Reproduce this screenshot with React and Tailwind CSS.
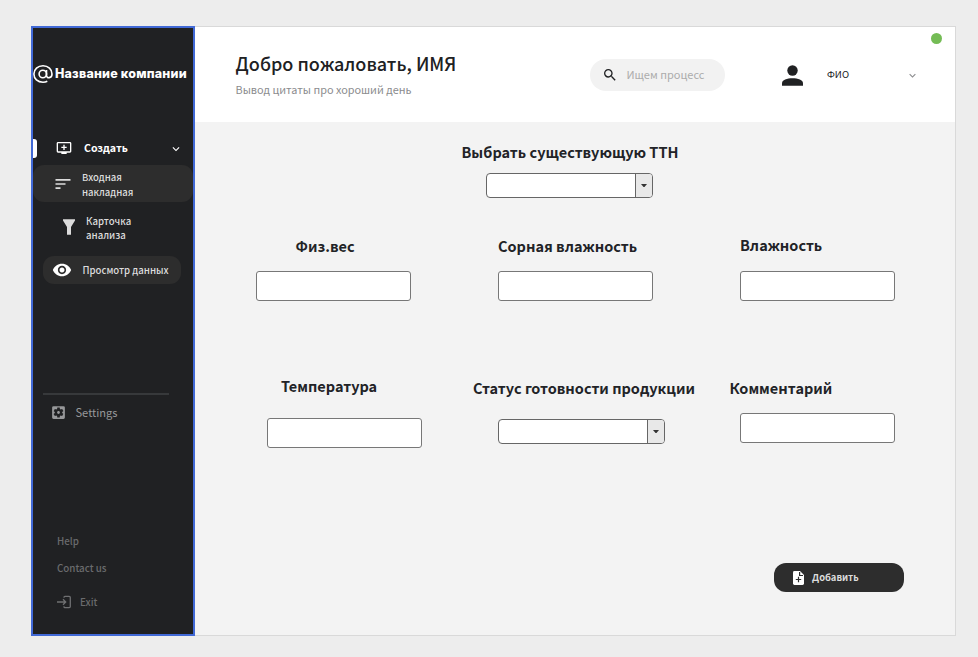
import {
  MdAddToQueue,
  MdExpandMore,
  MdSearch,
  MdSettingsApplications,
  MdSort,
  MdVisibility,
} from "react-icons/md";

function AtLogo() {
  return (
    <svg className="h-[18px] w-5 shrink-0" viewBox="0 0 20 18" fill="none" stroke="#fff" strokeWidth="1.600">
      <ellipse cx="9.8" cy="9" rx="3.7" ry="3.8" />
      <path d="M13.5 5v5.6c0 3 5.5 3 5.5-1.7C19 4.300 15.200.8 10 .8S.9 4.300.9 9s3.700 8.200 9.100 8.200c1.500 0 3-.3 4.300-1" />
    </svg>
  );
}

function FunnelIcon() {
  return (
    <svg className="h-4 w-3 shrink-0" viewBox="0 0 12 16" fill="#dcdcdc">
      <path d="M0 .3h12v1.200L8 8v7.700H4V8L0 1.500z" />
    </svg>
  );
}

function PersonIcon() {
  return (
    <svg className="h-[21px] w-[21px] shrink-0" viewBox="0 0 21 21" fill="#202123">
      <circle cx="10.500" cy="5.500" r="5.200" />
      <path d="M0 20.700v-2.400c0-3.300 5-5 10.500-5s10.500 1.700 10.500 5v2.400z" />
    </svg>
  );
}

function ExitIcon() {
  return (
    <svg className="h-[14px] w-[14px] shrink-0" viewBox="0 0 14 14" fill="none" stroke="#6f7072" strokeWidth="1.3">
      <path d="M0 7h9M6 4.300L8.700 7 6 9.700M7 2.800V2.200q0-.9.9-.9h4.300q1.100 0 1.100 1.100v9.200q0 1.100-1.100 1.100H7.900q-.9 0-.9-.9v-.6" />
    </svg>
  );
}

function FileAddIcon() {
  return (
    <svg className="h-[14px] w-[11px] shrink-0" viewBox="0 0 11 14">
      <path fill="#fff" d="M1.400 0H7l4 4v8.600q0 1.400-1.400 1.400H1.400Q0 14 0 12.600V1.400Q0 0 1.400 0z" />
      <path fill="none" stroke="#2d2d2d" strokeWidth="1.200" d="M6.600 1v3.500H10M5.500 5.800v5.400M2.800 8.500h5.400" />
    </svg>
  );
}

function Label({ className = "", children }) {
  return (
    <div className={`whitespace-nowrap text-[14.500px] font-bold leading-5 text-[#222327] ${className}`}>
      {children}
    </div>
  );
}

function TextInput({ className = "" }) {
  return <input className={`block h-[30px] w-[155px] rounded-[3px] border border-[#777] bg-white ${className}`} />;
}

function Select({ className = "" }) {
  return (
    <div className={`flex h-[25px] w-[167px] overflow-hidden rounded-[4px] border border-[#666] bg-white ${className}`}>
      <div className="flex-1" />
      <div className="flex w-[17px] items-center justify-center border-l border-[#666] bg-[#e8e8e8]">
        <svg className="h-[3px] w-[6px]" viewBox="0 0 6 3" fill="#333">
          <path d="M0 0h6L3.500 3h-1z" />
        </svg>
      </div>
    </div>
  );
}

function Sidebar() {
  return (
    <aside className="flex w-[164px] shrink-0 flex-col border-2 border-[#4169d6] bg-[#202123] text-[#dcdcdc]">
      <div className="mt-[37px] flex h-[18px] items-center gap-[2px]">
        <AtLogo />
        <span className="whitespace-nowrap font-['Inter','Liberation_Sans',sans-serif] text-[12.5px] font-extrabold leading-[18px] tracking-[0.2px] text-white">
          Название компании
        </span>
      </div>

      <nav className="mt-[56px] flex flex-col">
        <div className="flex h-5 items-center text-white">
          <span className="-mt-px h-[19px] w-1 rounded-r-[3px] bg-white" />
          <MdAddToQueue className="-mt-[3px] ml-[19px] size-4" />
          <span className="-mt-[2px] ml-[12px] text-[10.600px] font-bold leading-4">Создать</span>
          <MdExpandMore className="ml-auto mr-[10px] size-[14px]" />
        </div>
        <div className="mt-[6px] flex h-[37px] items-center rounded-[11px] bg-[#2d2d2d]">
          <MdSort className="ml-5 size-5" />
          <span className="ml-[9px] mt-[2px] text-[9.500px] font-medium leading-[15px]">
            Входная
            <br />
            накладная
          </span>
        </div>
        <div className="mt-[11px] flex h-[30px] items-center">
          <span className="-mt-[2px] ml-[30px] flex">
            <FunnelIcon />
          </span>
          <span className="ml-[11px] text-[9.600px] font-medium leading-[14px]">
            Карточка
            <br />
            анализа
          </span>
        </div>
        <div className="ml-[10px] mt-[13px] flex h-7 w-[138px] items-center rounded-[11px] bg-[#2d2d2d]">
          <MdVisibility className="ml-[9px] size-5 text-white" />
          <span className="ml-[10.500px] whitespace-nowrap text-[9.600px] font-medium">Просмотр данных</span>
        </div>
      </nav>

      <div className="ml-[10px] mt-[109px] h-[2px] w-[126px] bg-[#37393b]" />
      <div className="ml-[17px] mt-[8px] flex h-[18px] items-center text-[11.100px] text-[#97989a]">
        <MdSettingsApplications className="mt-px size-[17px]" />
        <span className="ml-[8.500px]">Settings</span>
      </div>

      <div className="mb-[22px] ml-6 mt-auto flex flex-col text-[9.800px] font-medium leading-5 text-[#6a6b6d]">
        <span>Help</span>
        <span className="mt-[7px]">Contact us</span>
        <span className="mt-[14px] flex items-center gap-[9px]">
          <ExitIcon />
          Exit
        </span>
      </div>
    </aside>
  );
}

function Header() {
  return (
    <header className="flex h-[95px] bg-white">
      <div className="ml-[40.500px] w-[354.500px] pt-[24px]">
        <h1 className="whitespace-nowrap text-[18px] font-medium leading-6 text-[#202123]">Добро пожаловать, ИМЯ</h1>
        <p className="mt-[6px] text-[10.860px] leading-4 text-[#8b8c8e]">Вывод цитаты про хороший день</p>
      </div>
      <div className="mt-8 flex h-8 w-[135px] items-center rounded-full bg-[#f2f2f2]">
        <MdSearch className="ml-3 size-4 text-[#202123]" />
        <span className="-mt-[2px] ml-[8.500px] text-[11px] leading-4 text-[#acacac]">Ищем процесс</span>
      </div>
      <div className="ml-[57px] mt-8 flex h-8 items-center">
        <PersonIcon />
        <span className="-mt-[2px] ml-6 text-[9.600px] leading-4 text-[#202123]">ФИО</span>
        <MdExpandMore className="ml-[57px] mt-px size-[13px] text-[#8b8c8e]" />
      </div>
      <div className="ml-[12px] mt-[6px] size-[11px] rounded-full bg-[#74bc55]" />
    </header>
  );
}

export default function App() {
  return (
    <div className="flex h-[657px] w-[978px] bg-[#ededed] pl-[31px] pt-[26px] font-['Noto_Sans_CJK_SC','Noto_Sans',sans-serif]">
      <div className="flex h-[610px] w-[925px]">
        <Sidebar />
        <main className="flex flex-1 flex-col border-y border-r border-[#d9d9d9] bg-[#f3f3f3]">
          <Header />
          <section className="pl-[266px] pt-5">
            <Label className="ml-[0.500px]">Выбрать существующую ТТН</Label>
            <Select className="ml-[25px] mt-[11px]" />
          </section>

          <section className="ml-[61px] mt-[37px] grid grid-cols-[242px_242px_155px]">
            <div>
              <Label className="ml-[39.500px] pt-px">Физ.вес</Label>
              <TextInput className="mt-[15px]" />
            </div>
            <div>
              <Label className="pt-px">Сорная влажность</Label>
              <TextInput className="mt-[15px]" />
            </div>
            <div>
              <Label>Влажность</Label>
              <TextInput className="mt-[16px]" />
            </div>
          </section>

          <section className="ml-[61px] mt-[75px] grid grid-cols-[242px_242px_155px]">
            <div>
              <Label className="ml-[25px]">Температура</Label>
              <TextInput className="ml-[11px] mt-[22px]" />
            </div>
            <div>
              <Label className="-ml-[25px] pt-[2px]">Статус готовности продукции</Label>
              <Select className="mt-[21px]" />
            </div>
            <div>
              <Label className="-ml-[10.500px] pt-[2px]">Комментарий</Label>
              <TextInput className="mt-[15px]" />
            </div>
          </section>

          <button className="mb-[43px] ml-[579px] mt-auto flex h-[29px] w-[130px] items-center gap-2 rounded-[12px] bg-[#2d2d2d] pl-[19px] text-[9.400px] font-bold text-[#dcdcdc]">
            <FileAddIcon />
            Добавить
          </button>
        </main>
      </div>
    </div>
  );
}
